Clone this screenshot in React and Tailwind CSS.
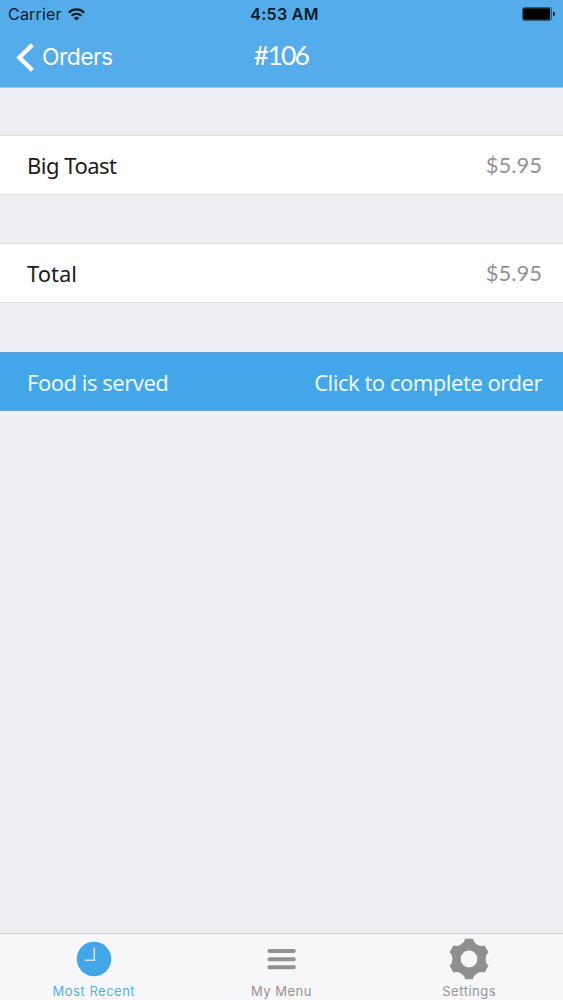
import React from 'react';

const GEAR_ANGLES = [0, 60, 120, 180, 240, 300];

const WifiIcon = () => (
  <svg width="17" height="13" viewBox="0 0 17 13" fill="none" stroke="#0b1a26" strokeWidth="2.2">
    <path d="M.8 4.6C5.2 .4 11.8 .4 16.2 4.6" />
    <path d="M3.6 7.8C6.5 5.2 10.5 5.2 13.4 7.8" />
    <path d="M8.5 12.6L5.8 9.9C7.3 8.5 9.7 8.5 11.2 9.9Z" fill="#0b1a26" stroke="none" />
  </svg>
);

const BatteryIcon = () => (
  <svg width="34" height="14" viewBox="0 0 34 14">
    <rect x=".5" y=".5" width="29" height="13" rx="2" fill="none" stroke="#163750" strokeOpacity=".7" />
    <rect x="1.2" y="1.2" width="27" height="11.6" rx="1" fill="#000" />
    <path d="M31 4.6C33.6 5 33.6 9 31 9.4Z" fill="#0b1a26" />
  </svg>
);

const BackIcon = () => (
  <svg width="18" height="29" viewBox="0 0 18 29" fill="none" stroke="#fff" strokeWidth="4.4">
    <path d="M16.4 1.8L3.4 14.5L16.4 27.2" />
  </svg>
);

const ClockIcon = () => (
  <svg width="42" height="42" viewBox="-21 -21 42 42">
    <circle r="17.3" fill="#43a6e9" />
    <path d="M.3 -11.5V1.3H-9.2" fill="none" stroke="#c5e6fa" strokeWidth="1.5" />
  </svg>
);

const MenuIcon = () => (
  <svg width="42" height="42" viewBox="-21 -21 42 42" stroke="#929292" strokeWidth="4" strokeLinecap="round">
    <path d="M-12.6 -8H11.8M-12.6 .2H11.8M-12.6 8.3H11.8" />
  </svg>
);

const GearIcon = () => (
  <svg width="42" height="42" viewBox="-21 -21 42 42" fill="#8f8f8f">
    <circle r="12.4" fill="none" stroke="#8f8f8f" strokeWidth="8" />
    {GEAR_ANGLES.map((angle) => (
      <path key={angle} transform={`rotate(${angle})`} d="M-3.8 -20.2H3.8Q4.6 -16.3 8.2 -14.2L6 -10H-6L-8.2 -14.2Q-4.6 -16.3 -3.8 -20.2Z" />
    ))}
  </svg>
);

const OrderRow = ({ label, price, labelClass }) => (
  <div className="flex h-[60px] items-center justify-between border-y border-[#dfdee2] bg-white pl-[27px] pr-[21px] text-[22px]">
    <span className={`text-[#1b1b1d] ${labelClass}`}>{label}</span>
    <span className="pb-px font-['Lato',sans-serif] text-[#929294]">{price}</span>
  </div>
);

const Tab = ({ icon: Icon, label, className }) => (
  <button className={`flex w-[188px] flex-col items-center pt-[4px] ${className}`}>
    <Icon />
    <span className="mt-[2px] text-[13px] leading-[18px]">{label}</span>
  </button>
);

const App = () => {
  return (
    <div className="flex h-[1000px] w-[563px] flex-col overflow-hidden bg-[#efeef3] font-['Noto_Sans',sans-serif]">
      <header className="h-[88px] border-b border-[#a5c6df] bg-[#55acea] font-['Inter',sans-serif]">
        <div className="grid h-[28px] grid-cols-3 items-center pl-[8px] pr-[7px] text-[#0b1a26]">
          <div className="flex items-center gap-[6px] text-[16px] tracking-[0.2px]">
            <span>Carrier</span>
            <WifiIcon />
          </div>
          <span className="pl-[5px] text-center text-[16px] font-semibold tracking-[0.3px]">4:53 AM</span>
          <div className="flex justify-end">
            <BatteryIcon />
          </div>
        </div>
        <div className="grid h-[58px] grid-cols-3 items-center pl-[16px] pr-[17px] text-white">
          <button className="flex items-center gap-[8px] text-[23px] tracking-[-0.6px]">
            <BackIcon />
            <span>Orders</span>
          </button>
          <h1 className="pb-[3px] text-center font-['Lato',sans-serif] text-[26.5px] tracking-[-1.8px]">#106</h1>
        </div>
      </header>

      <main className="flex flex-1 flex-col pt-[47px]">
        <OrderRow label="Big Toast" price="$5.95" labelClass="tracking-[-0.5px]" />
        <div className="h-[48px]" />
        <OrderRow label="Total" price="$5.95" labelClass="tracking-[0px]" />
        <button className="mt-[49px] flex h-[59px] items-center justify-between border-y border-[#5b9fd5] bg-[#43a6e9] pl-[27px] pr-[21px] pt-px text-[22px] text-[#eaf8ff]">
          <span className="tracking-[-0.5px]">Food is served</span>
          <span className="tracking-[-0.5px]">Click to complete order</span>
        </button>
      </main>

      <nav className="flex h-[67px] justify-between border-t border-[#cfced4] bg-[#f7f6f9] font-['Inter',sans-serif]">
        <Tab icon={ClockIcon} label="Most Recent" className="text-[#5aafe6] tracking-[0.5px]" />
        <Tab icon={MenuIcon} label="My Menu" className="text-[#959595] tracking-[0.5px]" />
        <Tab icon={GearIcon} label="Settings" className="text-[#959595] tracking-[0.5px]" />
      </nav>
    </div>
  );
};

export default App;
